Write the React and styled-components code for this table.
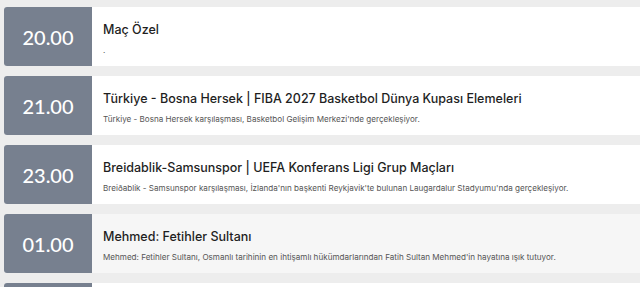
import React from 'react'
import styled, { createGlobalStyle } from 'styled-components'

const GlobalStyle = createGlobalStyle`
  html, body {
    margin: 0;
    padding: 0;
    background: #ededed;
    overflow: hidden;
  }
  body {
    font-family: Inter, "Noto Sans", sans-serif;
  }
`

const List = styled.div`
  display: flex;
  flex-direction: column;
  gap: 10px;
  padding: 7px 0 0 4px;
  height: 287px;
  box-sizing: border-box;
`

const Card = styled.div`
  display: flex;
  flex-shrink: 0;
  height: 59px;
  background: ${p => (p.$active ? '#f6f6f6' : '#ffffff')};
  border-radius: 3px 0 0 3px;
  overflow: hidden;
`

const Time = styled.div`
  width: 88px;
  flex-shrink: 0;
  display: flex;
  align-items: center;
  justify-content: center;
  background: #77808f;
  color: #ffffff;
  font-family: Lato, "Open Sans", sans-serif;
  font-size: 20px;
  font-weight: 500;
`

const Body = styled.div`
  display: flex;
  flex-direction: column;
  justify-content: center;
  gap: 8px;
  padding: 3px 0 0 11px;
  min-width: 0;
`

const Title = styled.div`
  font-size: 12.5px;
  font-weight: 500;
  color: #1f1f1f;
  white-space: nowrap;
`

const Desc = styled.div`
  font-size: 8.1px;
  color: #555555;
  white-space: nowrap;
`

const items = [
  { time: '20.00', title: 'Maç Özel', desc: '.' },
  {
    time: '21.00',
    title: 'Türkiye - Bosna Hersek | FIBA 2027 Basketbol Dünya Kupası Elemeleri',
    desc: "Türkiye - Bosna Hersek karşılaşması, Basketbol Gelişim Merkezi'nde gerçekleşiyor.",
  },
  {
    time: '23.00',
    title: 'Breidablik-Samsunspor | UEFA Konferans Ligi Grup Maçları',
    desc: "Breiðablik - Samsunspor karşılaşması, İzlanda'nın başkenti Reykjavik'te bulunan Laugardalur Stadyumu'nda gerçekleşiyor.",
  },
  {
    time: '01.00',
    title: 'Mehmed: Fetihler Sultanı',
    desc: "Mehmed: Fetihler Sultanı, Osmanlı tarihinin en ihtişamlı hükümdarlarından Fatih Sultan Mehmed'in hayatına ışık tutuyor.",
    active: true,
  },
]

export default function App() {
  return (
    <>
      <GlobalStyle />
      <List>
        {items.map(it => (
          <Card key={it.time} $active={it.active}>
            <Time>{it.time}</Time>
            <Body>
              <Title>{it.title}</Title>
              <Desc>{it.desc}</Desc>
            </Body>
          </Card>
        ))}
        <Card>
          <Time />
        </Card>
      </List>
    </>
  )
}
